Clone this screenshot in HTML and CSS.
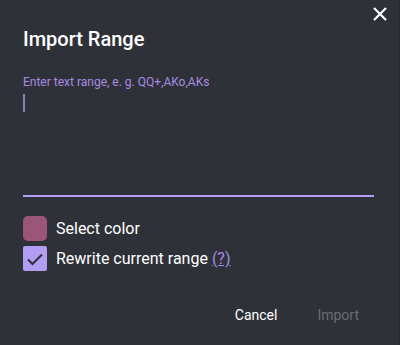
FILE: index.html
```html
<!DOCTYPE html>
<html lang="en">
  <head>
    <meta charset="UTF-8" />
    <meta name="viewport" content="width=device-width, initial-scale=1.0" />
    <title>Import Range</title>
    <link rel="stylesheet" href="styles.css">
  </head>
  <body>
    <div class="dialog">
      <button class="close" aria-label="Close">
        <svg width="14" height="14" viewBox="0 0 14 14">
          <path d="M1 1L13 13M13 1L1 13" stroke="#fff" stroke-width="2.2" />
        </svg>
      </button>
      <h1>Import Range</h1>
      <label class="field-label" for="rangeInput">Enter text range, e. g. QQ+,AKo,AKs</label>
      <div class="field">
        <span class="caret"></span>
      </div>
      <div class="options">
        <div class="option">
          <span class="swatch"></span>
          <span>Select color</span>
        </div>
        <div class="option">
          <span class="checkbox">
            <svg width="18" height="14" viewBox="0 0 18 14">
              <path d="M2 7.5L6.5 12L16 2.5" fill="none" stroke="#2f3139" stroke-width="2" />
            </svg>
          </span>
          <span>Rewrite current range <a href="#" class="help">(?)</a></span>
        </div>
      </div>
      <footer class="actions">
        <button class="btn">Cancel</button>
        <button class="btn disabled">Import</button>
      </footer>
    </div>
  </body>
</html>
```

FILE: styles.css
```css
body {
  margin: 0;
  background: #2f3139;
  font-family: Roboto, "Liberation Sans", sans-serif;
  color: #fff;
}
.dialog {
  position: relative;
  height: 345px;
  box-sizing: border-box;
  padding: 27px 25px 0 23px;
  border-right: 1px solid #25272d;
}
.close {
  position: absolute;
  top: 7px;
  right: 12px;
  background: none;
  border: none;
  padding: 0;
  cursor: pointer;
}
h1 {
  margin: 0;
  font-size: 20px;
  font-weight: 500;
  line-height: 24px;
}
.field-label {
  display: block;
  margin-top: 23px;
  font-size: 12px;
  color: #a78be0;
  line-height: 16px;
}
.field {
  height: 107px;
  border-bottom: 2px solid #b59cf5;
  padding-top: 4px;
  box-sizing: border-box;
}
.caret {
  display: block;
  width: 2px;
  height: 18px;
  background: #8e7cb8;
}
.options {
  margin-top: 19px;
  display: flex;
  flex-direction: column;
  gap: 5px;
}
.option {
  display: flex;
  align-items: center;
  gap: 9px;
  font-size: 16px;
  height: 25px;
}
.swatch {
  width: 24px;
  height: 25px;
  border-radius: 5px;
  background: #9b5577;
}
.checkbox {
  width: 24px;
  height: 25px;
  border-radius: 2px;
  background: #b39df2;
  display: flex;
  align-items: center;
  justify-content: center;
}
.help {
  color: #a78be0;
}
.actions {
  display: flex;
  justify-content: flex-end;
  gap: 20px;
  margin-top: 30px;
  padding-right: 5px;
}
.btn {
  background: none;
  border: none;
  font-family: inherit;
  font-size: 14px;
  font-weight: 400;
  color: #fff;
  padding: 6px 10px;
  cursor: pointer;
}
.btn.disabled {
  color: #6b6d73;
}
```
